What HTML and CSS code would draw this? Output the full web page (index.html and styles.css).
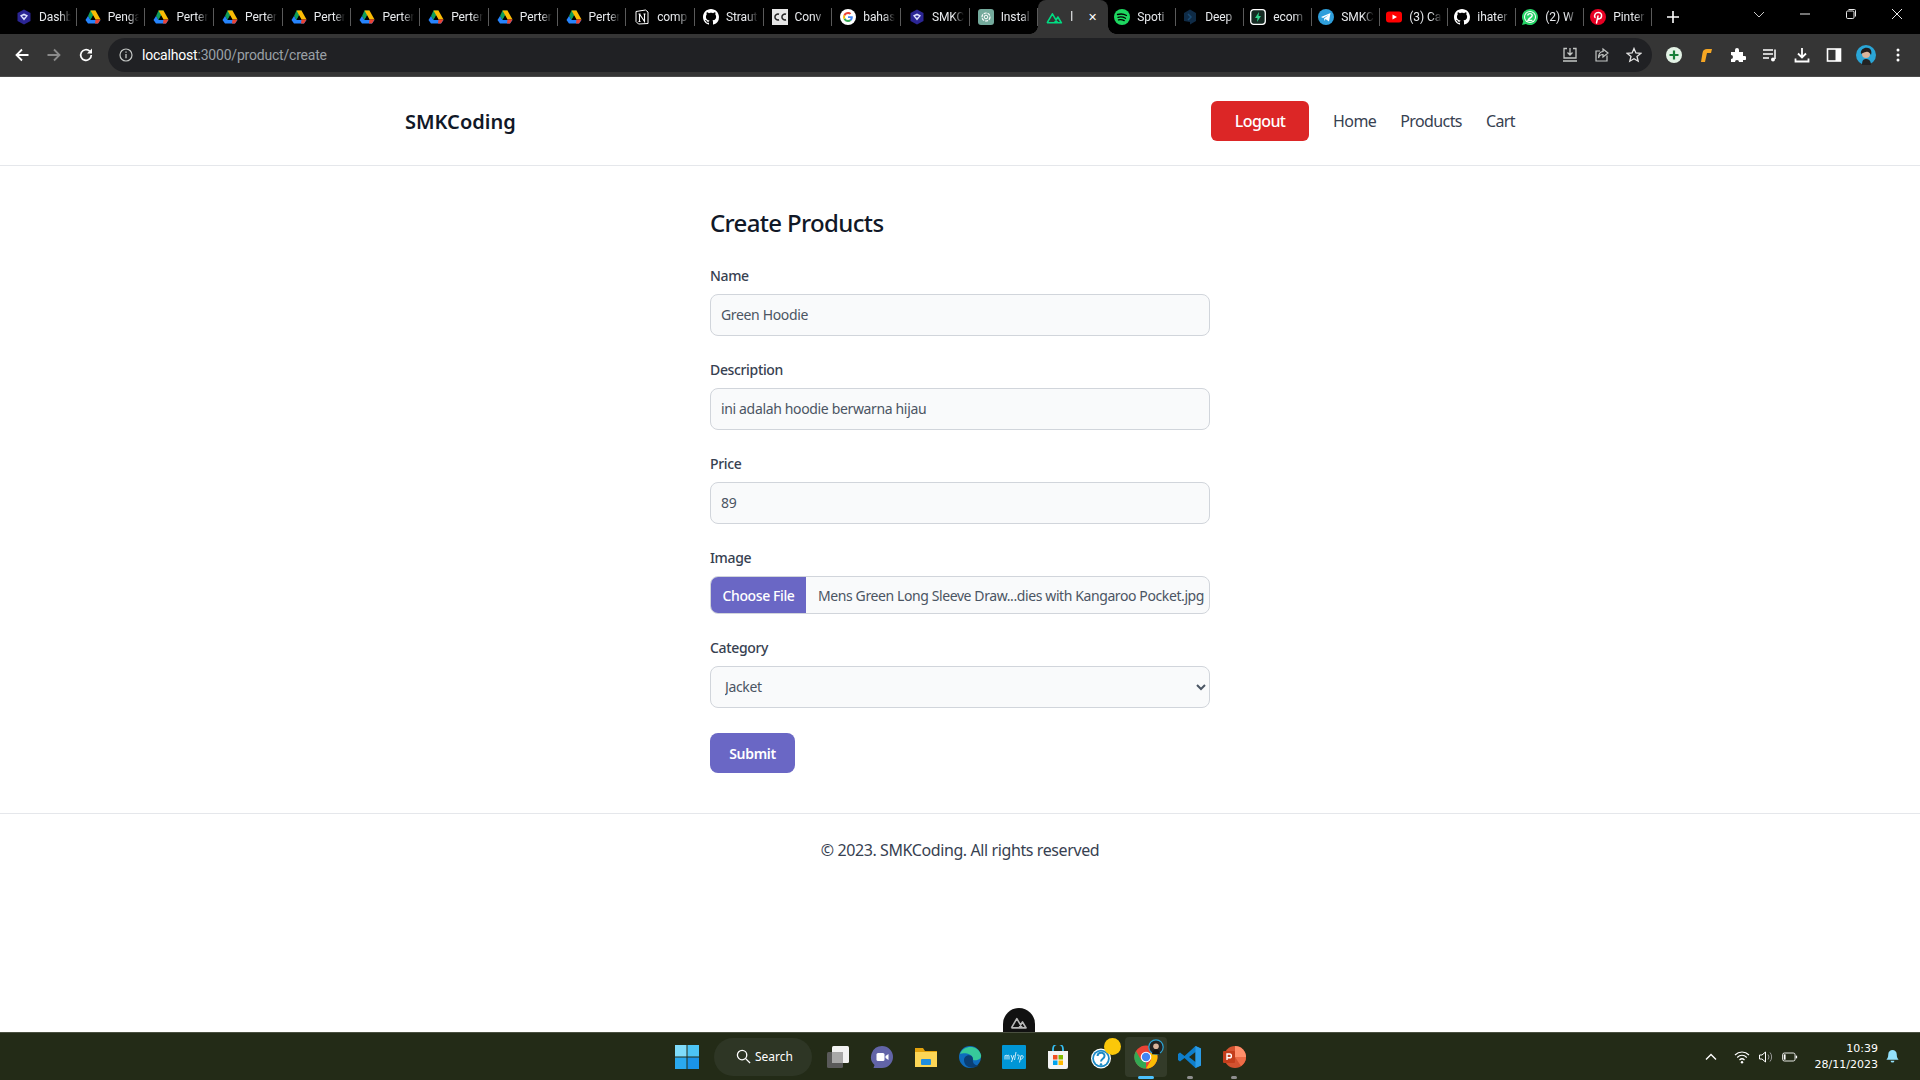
FILE: index.html
```html
<!DOCTYPE html>
<html lang="en">
<head>
<meta charset="utf-8">
<title>SMKCoding</title>
<link rel="stylesheet" href="styles.css">
</head>
<body>
<svg class="defs" width="0" height="0" aria-hidden="true">
  <symbol id="i-shield" viewBox="0 0 16 16"><path d="M8 .5 14.5 4v8L8 15.5 1.500 12V4z" fill="#2b2594"/><path d="M8 4.500 12 6.500 8 11.500 4 6.500z" fill="#dfe3ff"/><path d="M8 6.500 10 7 8 9 6 7z" fill="#2b2594"/></symbol>
  <symbol id="i-drive" viewBox="0 0 16 16"><path d="M5.500 1.500h5L8 6.500 5.500 11 3 7z" fill="#0f9d58"/><path d="M5.500 1.500h5l5 9h-5z" fill="#fbbc04"/><path d="M.5 11 3 7l2.500 4H15.500L13 14.500H3z" fill="#2684fc"/><path d="M10.500 10.500h5L13 14.500H10z" fill="#ea4335"/><path d="M6 10.500 8 7l2 3.500z" fill="#000"/></symbol>
  <symbol id="i-notion" viewBox="0 0 16 16"><path d="M2 2.500 11.500 1 14 3v11.500L4.500 15 2 12.500z" fill="#000" stroke="#fff" stroke-width="1"/><path d="M5.500 5v7.500M5.500 5l5 7.500V5M4.500 5h2M9.500 5h2M4.500 12.500h2" fill="none" stroke="#fff" stroke-width="1.100"/></symbol>
  <symbol id="i-github" viewBox="0 0 16 16"><path fill="#fff" d="M8 0C3.580 0 0 3.580 0 8c0 3.540 2.290 6.530 5.470 7.590.4.070.55-.17.55-.38 0-.19-.01-.82-.01-1.490-2.010.37-2.530-.49-2.690-.94-.09-.23-.48-.94-.82-1.130-.28-.15-.68-.52-.01-.53.63-.01 1.080.58 1.230.82.720 1.210 1.870.870 2.330.660.070-.520.280-.870.510-1.070-1.780-.2-3.640-.89-3.640-3.950 0-.870.310-1.590.820-2.150-.080-.2-.360-1.020.080-2.120 0 0 .670-.210 2.200.820.640-.180 1.320-.270 2-.270s1.360.090 2 .270c1.530-1.040 2.200-.820 2.200-.820.440 1.100.160 1.920.080 2.120.510.560.820 1.270.820 2.150 0 3.070-1.870 3.750-3.650 3.950.290.250.540.730.540 1.480 0 1.070-.010 1.930-.010 2.200 0 .210.150.460.550.380A8.010 8.010 0 0 0 16 8c0-4.420-3.580-8-8-8z"/></symbol>
  <symbol id="i-cc" viewBox="0 0 16 16"><rect width="16" height="16" fill="#e6e6e6"/><path d="M7 5.200A3 3 0 1 0 7 10.800M14 5.200A3 3 0 1 0 14 10.800" fill="none" stroke="#222" stroke-width="1.500"/></symbol>
  <symbol id="i-google" viewBox="0 0 16 16"><circle cx="8" cy="8" r="8" fill="#fff"/><path d="M12.800 8.200c0-.400 0-.700-.1-1H8v1.900h2.700c-.1.600-.5 1.200-1 1.500l1.500 1.200c.9-.8 1.600-2.100 1.600-3.600z" fill="#4285f4"/><path d="M8 13c1.300 0 2.400-.4 3.200-1.200l-1.500-1.200c-.4.300-1 .5-1.700.5-1.300 0-2.400-.9-2.800-2l-1.600 1.200C4.400 11.900 6 13 8 13z" fill="#34a853"/><path d="M5.200 9.100c-.2-.7-.2-1.500 0-2.200L3.600 5.700c-.7 1.400-.7 3.200 0 4.600z" fill="#fbbc05"/><path d="M8 4.900c.7 0 1.400.3 1.900.7l1.400-1.400C10.400 3.500 9.300 3 8 3 6 3 4.400 4.100 3.600 5.700l1.600 1.200c.4-1.100 1.500-2 2.800-2z" fill="#ea4335"/></symbol>
  <symbol id="i-openai" viewBox="0 0 16 16"><rect width="16" height="16" rx="3" fill="#74aa9c"/><circle cx="8" cy="8" r="4" fill="none" stroke="#fff" stroke-width="1.200" stroke-dasharray="3 1"/><circle cx="8" cy="8" r="1.800" fill="none" stroke="#fff"/></symbol>
  <symbol id="i-nuxt" viewBox="0 0 16 12"><path d="M1 11 6 2.500 11 11M8 11l3.200-5.500L14.500 11H1" fill="none" stroke="currentColor" stroke-width="1.500" stroke-linejoin="round"/></symbol>
  <symbol id="i-spotify" viewBox="0 0 16 16"><circle cx="8" cy="8" r="8" fill="#1ed760"/><path d="M3.500 5.500c3-.8 6.500-.5 9 1M4 8.300c2.500-.6 5.300-.3 7.500 1M4.500 10.800c2-.4 4-.2 5.700.8" fill="none" stroke="#000" stroke-width="1.300" stroke-linecap="round"/></symbol>
  <symbol id="i-deepl" viewBox="0 0 16 16"><path d="M8 .5 14 4v8l-6 3.500V13L2 12V4z" fill="#0f2b46"/><path d="M6 5l3 3-3 3" fill="none" stroke="#1a4a73" stroke-width="1.500"/></symbol>
  <symbol id="i-ecom" viewBox="0 0 16 16"><rect x=".7" y=".7" width="14.600" height="14.600" rx="3" fill="#142a22" stroke="#fff" stroke-width="1.300"/><path d="M9 3 5 9h2.500L7 13l4-6H8.500z" fill="#2fd48b"/></symbol>
  <symbol id="i-telegram" viewBox="0 0 16 16"><circle cx="8" cy="8" r="8" fill="#2f9fdc"/><path d="M3 8l9.500-4L11 12.500 7.500 10l-1 2L6 9.500 10.500 6 5 9z" fill="#fff"/></symbol>
  <symbol id="i-youtube" viewBox="0 0 16 12"><rect y=".5" width="16" height="11" rx="3" fill="#f00"/><path d="M6.500 3.500 11 6 6.500 8.500z" fill="#fff"/></symbol>
  <symbol id="i-whatsapp" viewBox="0 0 16 16"><path d="M8 0a8 8 0 0 0-6.800 12.200L0 16l3.900-1.100A8 8 0 1 0 8 0z" fill="#25d366"/><circle cx="8" cy="8" r="6" fill="#fff"/><circle cx="8" cy="8" r="5" fill="#25d366"/><path d="M5.800 6.400c0-2.400 4.400-2.400 4.400 0 0 1.800-3.600 3-4.200 5h4.400" fill="none" stroke="#fff" stroke-width="1.400"/></symbol>
  <symbol id="i-pinterest" viewBox="0 0 16 16"><circle cx="8" cy="8" r="8" fill="#e60023"/><path d="M6.500 14 8 7M5 8.500C3.800 6 5.500 3.500 8.200 3.500c2.500 0 3.800 1.700 3.300 4-.4 2-2.800 3.300-3.900 1.500" fill="none" stroke="#fff" stroke-width="1.500" stroke-linecap="round"/></symbol>
</svg>

<div class="screen">
  <div class="tabstrip">
    <div class="tab"><svg class="fav"><use href="#i-shield"/></svg><span class="tab-title">Dashb</span></div>
    <div class="tab"><svg class="fav"><use href="#i-drive"/></svg><span class="tab-title">Penga</span></div>
    <div class="tab"><svg class="fav"><use href="#i-drive"/></svg><span class="tab-title">Perter</span></div>
    <div class="tab"><svg class="fav"><use href="#i-drive"/></svg><span class="tab-title">Perter</span></div>
    <div class="tab"><svg class="fav"><use href="#i-drive"/></svg><span class="tab-title">Perter</span></div>
    <div class="tab"><svg class="fav"><use href="#i-drive"/></svg><span class="tab-title">Perter</span></div>
    <div class="tab"><svg class="fav"><use href="#i-drive"/></svg><span class="tab-title">Perter</span></div>
    <div class="tab"><svg class="fav"><use href="#i-drive"/></svg><span class="tab-title">Perter</span></div>
    <div class="tab"><svg class="fav"><use href="#i-drive"/></svg><span class="tab-title">Perter</span></div>
    <div class="tab"><svg class="fav"><use href="#i-notion"/></svg><span class="tab-title">comp</span></div>
    <div class="tab"><svg class="fav"><use href="#i-github"/></svg><span class="tab-title">Straut</span></div>
    <div class="tab"><svg class="fav"><use href="#i-cc"/></svg><span class="tab-title">Conv</span></div>
    <div class="tab"><svg class="fav"><use href="#i-google"/></svg><span class="tab-title">bahas</span></div>
    <div class="tab"><svg class="fav"><use href="#i-shield"/></svg><span class="tab-title">SMKC</span></div>
    <div class="tab"><svg class="fav"><use href="#i-openai"/></svg><span class="tab-title">Instal</span></div>
    <div class="tab tab-active"><svg class="fav fav-nuxt"><use href="#i-nuxt"/></svg><span class="tab-title">l</span><span class="tab-close">✕</span></div>
    <div class="tab"><svg class="fav"><use href="#i-spotify"/></svg><span class="tab-title">Spoti</span></div>
    <div class="tab"><svg class="fav"><use href="#i-deepl"/></svg><span class="tab-title">Deep</span></div>
    <div class="tab"><svg class="fav"><use href="#i-ecom"/></svg><span class="tab-title">ecom</span></div>
    <div class="tab"><svg class="fav"><use href="#i-telegram"/></svg><span class="tab-title">SMKC</span></div>
    <div class="tab"><svg class="fav"><use href="#i-youtube"/></svg><span class="tab-title">(3) Ca</span></div>
    <div class="tab"><svg class="fav"><use href="#i-github"/></svg><span class="tab-title">ihater</span></div>
    <div class="tab"><svg class="fav"><use href="#i-whatsapp"/></svg><span class="tab-title">(2) W</span></div>
    <div class="tab"><svg class="fav"><use href="#i-pinterest"/></svg><span class="tab-title">Pinter</span></div>
    <svg class="newtab" viewBox="0 0 12 12"><path d="M6 0v12M0 6h12" stroke="#fff" stroke-width="1.600"/></svg>
    <div class="winctl">
      <svg class="win-ico" viewBox="0 0 12 12"><path d="M1 4l5 5 5-5" fill="none" stroke="#c8c8c8"/></svg>
      <svg class="win-ico win-gap" viewBox="0 0 12 12"><path d="M1 6h10" stroke="#e8e8e8"/></svg>
      <svg class="win-ico win-gap" viewBox="0 0 12 12"><rect x="1.500" y="3" width="7.500" height="7.500" rx="1.200" fill="none" stroke="#e8e8e8"/><path d="M3.500 1.500h6a1 1 0 0 1 1 1v6" fill="none" stroke="#e8e8e8"/></svg>
      <svg class="win-ico win-gap" viewBox="0 0 12 12"><path d="M1 1l10 10M11 1 1 11" stroke="#e8e8e8"/></svg>
    </div>
  </div>

  <div class="toolbar">
    <svg class="tb-ico" viewBox="0 0 16 16"><path d="M14.500 8H2.500M8 2.500 2.500 8 8 13.500" fill="none" stroke="#fff" stroke-width="1.800"/></svg>
    <svg class="tb-ico tb-gap-nav" viewBox="0 0 16 16"><path d="M1.500 8h12M8 2.500 13.500 8 8 13.500" fill="none" stroke="#8a8a8a" stroke-width="1.800"/></svg>
    <svg class="tb-ico tb-gap-nav" viewBox="0 0 16 16"><path d="M13.300 8a5.300 5.300 0 1 1-1.600-3.800" fill="none" stroke="#fff" stroke-width="1.700"/><path d="M14 1.500v5h-5z" fill="#fff"/></svg>
    <div class="omnibox">
      <svg class="info" viewBox="0 0 14 14"><circle cx="7" cy="7" r="6" fill="none" stroke="#c4c7c5" stroke-width="1.200"/><path d="M7 6v4.200M7 3.500v1.300" stroke="#c4c7c5" stroke-width="1.300"/></svg>
      <span class="url"><span class="url-host">localhost</span>:3000/product/create</span>
      <div class="omni-actions">
        <svg class="tb-ico" viewBox="0 0 16 16"><path d="M5 1.500H2v9.500h12V1.500h-3M8 1v7M5.500 5.500 8 8l2.500-2.500M1 14h14" fill="none" stroke="#c4c7c5" stroke-width="1.300"/></svg>
        <svg class="tb-ico" viewBox="0 0 16 16"><path d="M13 8.500V14H2V4h4M9 2l5 4-5 4V7.500C6.500 7.500 5 9 4.500 11 4.500 7 6 4.700 9 4.500z" fill="none" stroke="#c4c7c5" stroke-width="1.200"/></svg>
        <svg class="tb-ico" viewBox="0 0 16 16"><path d="M8 1.500 9.900 6l4.800.4-3.700 3.100 1.200 4.700L8 11.700l-4.200 2.500L5 9.500 1.300 6.400 6.100 6z" fill="none" stroke="#e3e3e3" stroke-width="1.300"/></svg>
      </div>
    </div>
    <div class="extensions">
      <svg class="tb-ico" viewBox="0 0 16 16"><circle cx="8" cy="8" r="8" fill="#e4f3e6"/><path d="M8 3.500v9M3.500 8h9" stroke="#188038" stroke-width="2.200"/></svg>
      <svg class="tb-ico" viewBox="0 0 16 16"><path d="M3 15l1.500-9C5 3 6.500 2 9 2h5l-1 4H9l-2 9z" fill="#f6a623"/></svg>
      <svg class="tb-ico" viewBox="0 0 16 16"><path d="M1 5h4V3a2 2 0 0 1 4 0v2h4v4h1.500a2 2 0 0 1 0 4H13v2H9a2 2 0 0 0-4 0H1v-3a2 2 0 0 0 0-4z" fill="#fff"/></svg>
      <svg class="tb-ico" viewBox="0 0 16 16"><path d="M1 3h10M1 7h10M1 11h6" stroke="#fff" stroke-width="1.500"/><path d="M13 2.500V12" stroke="#fff" stroke-width="1.500"/><circle cx="11" cy="12.500" r="2" fill="#fff"/></svg>
      <svg class="tb-ico" viewBox="0 0 16 16"><path d="M8 1v9M4 6.500 8 10.500l4-4M1.500 11.500V14.500h13v-3" fill="none" stroke="#fff" stroke-width="1.800"/></svg>
      <svg class="tb-ico" viewBox="0 0 16 16"><rect x="1.500" y="2" width="13" height="12" fill="none" stroke="#fff" stroke-width="1.600"/><rect x="9.500" y="2" width="5" height="12" fill="#fff"/></svg>
      <svg class="tb-ico tb-avatar" viewBox="0 0 20 20"><circle cx="10" cy="10" r="10" fill="#2aa5d6"/><path d="M6 20c0-4 1-6 4-6s5 2 5 6z" fill="#222"/><circle cx="10" cy="9" r="4" fill="#d9b39b"/><path d="M5 9c-1-5 4-7 7-6 3 0 4 4 3 7-1-2-3-4-5-3-2 0-3 1-5 2z" fill="#221b1b"/></svg>
      <svg class="tb-ico" viewBox="0 0 16 16"><circle cx="8" cy="3" r="1.500" fill="#fff"/><circle cx="8" cy="8" r="1.500" fill="#fff"/><circle cx="8" cy="13" r="1.500" fill="#fff"/></svg>
    </div>
  </div>

  <div class="viewport">
    <header class="navbar">
      <a class="brand">SMKCoding</a>
      <nav class="nav">
        <button class="logout" type="button">Logout</button>
        <a class="nav-link">Home</a>
        <a class="nav-link">Products</a>
        <a class="nav-link">Cart</a>
      </nav>
    </header>

    <main class="content">
      <form class="form">
        <h1 class="title">Create Products</h1>
        <div class="field">
          <label class="label">Name</label>
          <input class="control" type="text" value="Green Hoodie">
        </div>
        <div class="field">
          <label class="label">Description</label>
          <input class="control" type="text" value="ini adalah hoodie berwarna hijau">
        </div>
        <div class="field">
          <label class="label">Price</label>
          <input class="control" type="text" value="89">
        </div>
        <div class="field">
          <label class="label">Image</label>
          <div class="file">
            <span class="file-btn">Choose File</span>
            <span class="file-name">Mens Green Long Sleeve Draw...dies with Kangaroo Pocket.jpg</span>
          </div>
        </div>
        <div class="field field-select">
          <label class="label">Category</label>
          <select class="control select"><option>Jacket</option></select>
        </div>
        <button class="submit" type="button">Submit</button>
      </form>
    </main>

    <footer class="footer">© 2023. SMKCoding. All rights reserved</footer>

    <div class="devtools"><svg class="devtools-ico"><use href="#i-nuxt"/></svg></div>
  </div>

  <div class="taskbar">
    <div class="apps">
      <svg class="app" viewBox="0 0 24 24"><rect x="0" y="0" width="11.500" height="11.500" fill="#7fdcfb"/><rect x="12.500" y="0" width="11.500" height="11.500" fill="#4cc4f5"/><rect x="0" y="12.500" width="11.500" height="11.500" fill="#2aa9ef"/><rect x="12.500" y="12.500" width="11.500" height="11.500" fill="#1a93e8"/></svg>
      <div class="search">
        <svg class="search-ico" viewBox="0 0 16 16"><circle cx="6.500" cy="6.500" r="5" fill="none" stroke="#fff" stroke-width="1.400"/><path d="M10 10l5 5" stroke="#fff" stroke-width="1.400"/></svg>
        <span class="search-text">Search</span>
      </div>
      <svg class="app" viewBox="0 0 24 24"><rect x="1" y="7" width="16" height="16" rx="1.500" fill="#5a5a5a"/><rect x="6" y="1" width="17" height="17" rx="1.500" fill="#f2f2f2"/><rect x="6" y="7" width="11" height="11" fill="#a8a8a8"/></svg>
      <svg class="app" viewBox="0 0 24 24"><path d="M12 1a11 11 0 0 1 0 22H3.500l1-3A11 11 0 0 1 12 1z" fill="#6264a7"/><rect x="6.500" y="8" width="8" height="8" rx="1.500" fill="#fff"/><path d="M15.500 11l3-2v6l-3-2z" fill="#fff"/></svg>
      <svg class="app" viewBox="0 0 24 24"><path d="M1 3h8l2 3h12v16H1z" fill="#e3a30d"/><rect x="1" y="7" width="22" height="15" fill="#fcd656"/><rect x="7" y="14" width="10" height="6" rx="1" fill="#1f8ee0"/></svg>
      <svg class="app" viewBox="0 0 24 24"><circle cx="12" cy="12" r="11" fill="#0f6cbd"/><path d="M2 9C5 0 20-1 23 10c1 4-4 6-8 5 1-6-9-8-13-6z" fill="#37c99a"/><path d="M6 15c0-5 8-7 9-1-1 5 3 7 6 6-5 5-15 3-15-5z" fill="#0a3f75"/></svg>
      <svg class="app" viewBox="0 0 24 24"><rect width="24" height="24" rx="1" fill="#0096d6"/><path d="M3 14.500v-4M3 11c1-1 2-1 2 0v3.500M5 11c1-1 2-1 2 0v3.500M9 10l1.500 4L12 10M10.500 14 9.500 17M14 7l-1.500 8M15 10.500c1-1 2.500-.8 2 1l-1 3M19 10.500l-1.500 7M19 11c1.500-1 2.500 0 2 1.500-.5 1.500-2 2-3 1.500" fill="none" stroke="#fff" stroke-width=".8"/></svg>
      <svg class="app" viewBox="0 0 24 24"><path d="M7 6V4a5 5 0 0 1 10 0v2" fill="none" stroke="#35bdf2" stroke-width="1.800"/><path d="M2 6h20v16a2 2 0 0 1-2 2H4a2 2 0 0 1-2-2z" fill="#f4f4f4"/><rect x="7" y="10" width="4.500" height="4.500" fill="#f25022"/><rect x="12.500" y="10" width="4.500" height="4.500" fill="#7fba00"/><rect x="7" y="15.500" width="4.500" height="4.500" fill="#00a4ef"/><rect x="12.500" y="15.500" width="4.500" height="4.500" fill="#ffb900"/></svg>
      <span class="app-wrap">
        <svg class="app" viewBox="0 0 24 24"><circle cx="11" cy="13.500" r="10" fill="#fff"/><circle cx="11" cy="13.500" r="8.800" fill="#1c8bc6"/><circle cx="11" cy="13.500" r="7" fill="#fff"/><path d="M7.500 11c.5-4.500 7.500-4 7 0 0 3-3.500 2.500-3.500 5.500" fill="none" stroke="#1c8bc6" stroke-width="2"/><circle cx="11" cy="19.500" r="1.300" fill="#1c8bc6"/></svg>
        <span class="help-dot"></span>
      </span>
      <span class="app-wrap app-active">
        <svg class="app" viewBox="0 0 24 24"><circle cx="12" cy="12" r="11.500" fill="#ea4335"/><path d="M12 23.500A11.500 11.500 0 0 1 2 6l5 9 5 1z" fill="#34a853"/><path d="M23.500 12A11.500 11.500 0 0 1 12 23.500L17 15l-1-7h6.700c.5 1.200.8 2.600.8 4z" fill="#fbbc05"/><circle cx="12" cy="12" r="5.300" fill="#fff"/><circle cx="12" cy="12" r="4.200" fill="#4285f4"/></svg>
        <svg class="chrome-avatar" viewBox="0 0 20 20"><circle cx="10" cy="10" r="9" fill="#222" stroke="#2aa5d6" stroke-width="1.500"/><circle cx="10" cy="9" r="3.500" fill="#d9b39b"/><path d="M5 19c0-4 2-6 5-6s5 2 5 6z" fill="#111"/></svg>
        <span class="running running-active"></span>
      </span>
      <span class="app-wrap">
        <svg class="app" viewBox="0 0 24 24"><path d="M17.500 1 23 3.500v17L17.500 23 6.500 13 2 16.500 0 15V9l2-1.500L6.500 11zM17.500 7 11 12l6.500 5z" fill="#0e7ecb"/><path d="M17.500 1 23 3.500v17L17.500 23z" fill="#2a9be6"/></svg>
        <span class="running"></span>
      </span>
      <span class="app-wrap">
        <svg class="app" viewBox="0 0 24 24"><circle cx="13" cy="12" r="11" fill="#d35230"/><path d="M13 1a11 11 0 0 1 11 11H13z" fill="#ff8f6b"/><path d="M13 12h11a11 11 0 0 1-5 9z" fill="#ed6c47"/><rect x="1" y="6" width="12" height="12" rx="1" fill="#c43e1c"/><path d="M5 15V9h2.500a1.800 1.800 0 0 1 0 3.800H5" fill="none" stroke="#fff" stroke-width="1.400"/></svg>
        <span class="running"></span>
      </span>
    </div>
    <div class="tray">
      <svg class="tray-ico" viewBox="0 0 14 14"><path d="M2 9.500 7 4.500l5 5" fill="none" stroke="#fff" stroke-width="1.400"/></svg>
      <svg class="tray-ico tray-gap" viewBox="0 0 16 14"><path d="M1 5c4-4 10-4 14 0M3.200 7.500c3-3 6.600-3 9.600 0M5.500 10c1.500-1.500 3.500-1.500 5 0" fill="none" stroke="#fff" stroke-width="1.200"/><circle cx="8" cy="12.200" r="1.200" fill="#fff"/></svg>
      <svg class="tray-ico tray-gap-s" viewBox="0 0 16 14"><path d="M1.500 5v4H4l3.500 3V2L4 5z" fill="none" stroke="#fff"/><path d="M10 4.500a4 4 0 0 1 0 5M12 2.500a7 7 0 0 1 0 9" fill="none" stroke="#9a9a9a"/></svg>
      <svg class="tray-ico tray-gap-s" viewBox="0 0 18 14"><rect x=".7" y="2.500" width="14" height="9" rx="2" fill="none" stroke="#fff"/><rect x="2" y="4" width="2" height="6" fill="#fff"/><rect x="15.500" y="5.500" width="1.500" height="3" fill="#fff"/></svg>
      <div class="clock"><span>10:39</span><span>28/11/2023</span></div>
      <svg class="bell" viewBox="0 0 16 16"><path d="M8 1a4.500 4.500 0 0 1 4.500 4.500c0 3.500 1 4.500 2 6H1.500c1-1.500 2-2.500 2-6A4.500 4.500 0 0 1 8 1z" fill="#93e0fb"/><path d="M6 12.500h4a2 2 0 0 1-4 0z" fill="#93e0fb"/></svg>
    </div>
  </div>
</div>
</body>
</html>
```

FILE: styles.css
```css
* { box-sizing: border-box; }
html, body { margin: 0; height: 100%; }
body { font-family: "Noto Sans", "Open Sans", sans-serif; color: #111827; background: #fff; overflow: hidden; }
.defs { position: absolute; }

.screen { display: flex; flex-direction: column; height: 1080px; }

/* Browser tab strip */
.tabstrip { display: flex; align-items: center; height: 34px; flex: none; background: #000; padding-left: 8px; position: relative; }
.tab { width: 68.7px; height: 34px; flex: none; display: flex; align-items: center; gap: 7px; padding: 0 6px 0 8px; position: relative; color: #e8eaed; font: 12px "Roboto", sans-serif; letter-spacing: -0.1px; }
.tab::after { content: ""; position: absolute; right: 0; top: 8px; height: 18px; width: 1px; background: #5a5a5a; }
.tab-active { width: 70px; background: #353535; border-radius: 8px 8px 0 0; padding: 0 11px 0 8px; }
.tab-active::before, .tab-active::after { content: ""; display: block; position: absolute; top: auto; bottom: 0; width: 8px; height: 8px; background: radial-gradient(circle at 0 0, #000 7.5px, #353535 8px); }
.tab-active::before { left: -8px; }
.tab-active::after { right: -8px; left: auto; background: radial-gradient(circle at 100% 0, #000 7.5px, #353535 8px); }
.tab-active ~ .tab { width: 68px; padding-left: 6px; }
.fav { width: 16px; height: 16px; flex: none; }
.fav-nuxt { color: #00dc82; width: 17px; height: 13px; }
.tab-title { flex: 1; min-width: 0; overflow: hidden; white-space: nowrap; -webkit-mask-image: linear-gradient(90deg, #000 65%, transparent); mask-image: linear-gradient(90deg, #000 65%, transparent); }
.tab-close { font-size: 11px; color: #fff; flex: none; }
.newtab { width: 12px; height: 12px; margin-left: 15px; flex: none; }
.winctl { display: flex; align-items: center; margin-left: auto; margin-right: 17px; height: 34px; padding-bottom: 6px; }
.win-ico { width: 12px; height: 12px; }
.win-gap { margin-left: 34px; }

/* Browser toolbar */
.toolbar { display: flex; align-items: center; height: 43px; flex: none; background: #353535; padding: 0 14px 1px 14px; border-bottom: 1px solid #4a4a4a; }
.tb-ico { width: 16px; height: 16px; flex: none; }
.tb-gap-nav { margin-left: 16px; }
.omnibox { display: flex; align-items: center; height: 34px; width: 1544px; margin-left: 14px; background: #202124; border-radius: 17px; padding: 0 10px 0 11px; flex: none; }
.info { width: 14px; height: 14px; flex: none; }
.url { margin-left: 9px; font: 14px "Roboto", sans-serif; letter-spacing: -0.2px; color: #9aa0a6; }
.url-host { color: #fff; }
.omni-actions { display: flex; gap: 16px; margin-left: auto; }
.extensions { display: flex; align-items: center; gap: 16px; margin-left: 14px; }
.tb-avatar { width: 20px; height: 20px; margin: 0 -2px; }

/* Page */
.viewport { flex: 1; min-height: 0; display: flex; flex-direction: column; position: relative; background: #fff; }
.navbar { height: 89px; flex: none; display: flex; align-items: center; justify-content: space-between; padding: 0 405px; border-bottom: 1px solid #e5e7eb; }
.brand { font-size: 20px; font-weight: 600; color: #111827; }
.nav { display: flex; align-items: center; gap: 24px; }
.logout { width: 98px; height: 40px; border: 0; border-radius: 6px; background: #dc2626; color: #fff; font: 500 16px "Noto Sans", sans-serif; letter-spacing: -0.6px; }
.nav-link { font-size: 16px; letter-spacing: -0.6px; color: #374151; }

.content { display: flex; justify-content: center; flex: none; height: 648px; border-bottom: 1px solid #e5e7eb; padding-top: 41px; }
.form { width: 500px; display: flex; flex-direction: column; align-items: stretch; }
.title { margin: 0 0 27px; font-size: 24px; line-height: 32px; font-weight: 500; letter-spacing: -0.65px; color: #111827; }
.field { display: flex; flex-direction: column; margin-bottom: 24px; }
.field-select { margin-bottom: 25px; }
.label { font-size: 14px; line-height: 20px; font-weight: 500; letter-spacing: -0.35px; color: #374151; margin-bottom: 8px; }
.control { display: block; width: 100%; height: 42px; padding: 0 10px 1px; border: 1px solid #d1d5db; border-radius: 8px; background: #f9fafb; color: #4b5563; font: 14px "Noto Sans", sans-serif; letter-spacing: -0.35px; outline: 0; }
.file { display: flex; align-items: center; height: 38px; border: 1px solid #d1d5db; border-radius: 8px; background: #f9fafb; overflow: hidden; }
.file-btn { align-self: stretch; width: 95px; flex: none; display: flex; align-items: center; justify-content: center; background: #6a67c5; color: #fff; font-size: 14px; font-weight: 500; letter-spacing: -0.4px; }
.file-name { margin-left: 12px; font-size: 14px; letter-spacing: -0.4px; color: #4b5563; white-space: nowrap; }
.submit { align-self: flex-start; width: 85px; height: 40px; border: 0; border-radius: 8px; background: #6a67c5; color: #fff; font: 600 14px "Noto Sans", sans-serif; letter-spacing: -0.3px; }

.footer { text-align: center; margin-top: 20px; font-size: 16px; line-height: 32px; letter-spacing: -0.4px; color: #374151; }

.devtools { position: absolute; left: 1003px; bottom: 0; width: 32px; height: 24px; background: #111; border-radius: 16px 16px 0 0; display: flex; align-items: center; justify-content: center; color: #b8b8b8; }
.devtools-ico { width: 18px; height: 13px; margin-top: 4px; }

/* Windows taskbar */
.taskbar { height: 48px; flex: none; display: flex; align-items: center; background: #232b17; border-top: 1px solid #4a5040; padding-left: 675px; padding-right: 20px; }
.apps { display: flex; align-items: center; }
.app { width: 24px; height: 24px; display: block; flex: none; margin: 0 10px; }
.apps > .app:first-child { margin: 0; }
.apps > .app:nth-child(3) { margin-left: 14px; }
.search { display: flex; align-items: center; width: 98px; height: 38px; margin-left: 15px; border-radius: 19px; background: #2e3625; padding-left: 22px; }
.search-ico { width: 15px; height: 15px; flex: none; }
.search-text { margin-left: 4px; color: #fff; font: 12px "Noto Sans", sans-serif; }
.app-wrap { position: relative; display: block; }
.app-active::before { content: ""; position: absolute; inset: -8px 1px -8px 1px; background: #333b29; border-radius: 4px; }
.app-active .app { position: relative; }
.help-dot { position: absolute; right: 3px; top: -7px; width: 17px; height: 17px; border-radius: 50%; background: #fbc80a; }
.chrome-avatar { position: absolute; right: 4px; top: -6px; width: 16px; height: 16px; }
.running { position: absolute; left: 50%; bottom: -10px; width: 6px; height: 3px; margin-left: -3px; border-radius: 2px; background: #8f8f8f; }
.running-active { width: 16px; margin-left: -8px; background: #4cc2ff; }
.tray { display: flex; align-items: center; margin-left: auto; }
.tray-ico { width: 14px; height: 14px; flex: none; }
.tray-gap { margin-left: 16px; width: 16px; }
.tray-gap-s { margin-left: 8px; width: 16px; }
.clock { display: flex; flex-direction: column; align-items: flex-end; margin-left: 17px; font: 11px/16px "DejaVu Sans", sans-serif; color: #fff; }
.bell { width: 15px; height: 15px; margin-left: 7px; flex: none; }
```
